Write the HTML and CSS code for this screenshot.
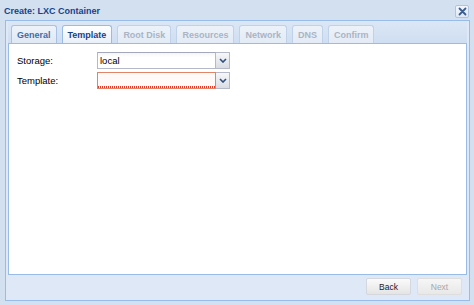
FILE: index.html
```html
<!DOCTYPE html>
<html>
<head>
<meta charset="utf-8">
<link rel="stylesheet" href="styles.css">
</head>
<body>
<div class="window">
  <div class="header">
    <span class="title">Create: LXC Container</span>
    <span class="close"><svg width="9" height="9" viewBox="0 0 9 9"><path d="M1.5 1.5 L7.5 7.5 M7.5 1.5 L1.5 7.5" stroke="#3b5d8f" stroke-width="1.8" stroke-linecap="round"/></svg></span>
  </div>
  <div class="wbody">
    <div class="tabpanel">
      <div class="tabbar">
        <div class="tab">General</div>
        <div class="tab active">Template</div>
        <div class="tab disabled">Root Disk</div>
        <div class="tab disabled">Resources</div>
        <div class="tab disabled">Network</div>
        <div class="tab disabled">DNS</div>
        <div class="tab disabled">Confirm</div>
      </div>
      <div class="tabbody">
        <div class="row">
          <label class="label">Storage:</label>
          <div class="combo">
            <div class="input">local</div>
            <div class="trigger"><svg width="8" height="5" viewBox="0 0 8 5"><path d="M1 1 L4 4 L7 1" fill="none" stroke="#2f4f7f" stroke-width="1.6"/></svg></div>
          </div>
        </div>
        <div class="row">
          <label class="label">Template:</label>
          <div class="combo">
            <div class="input invalid"></div>
            <div class="trigger"><svg width="8" height="5" viewBox="0 0 8 5"><path d="M1 1 L4 4 L7 1" fill="none" stroke="#2f4f7f" stroke-width="1.6"/></svg></div>
          </div>
        </div>
      </div>
    </div>
    <div class="footer">
      <div class="btn">Back</div>
      <div class="btn disabled">Next</div>
    </div>
  </div>
</div>
</body>
</html>
```
FILE: styles.css
```css
html, body {
  margin: 0;
  padding: 0;
}
body {
  font-family: "Liberation Sans", Arial, sans-serif;
  background: #ffffff;
}
.window {
  width: 474px;
  height: 305px;
  box-sizing: border-box;
  background: #d3e0f0;
  padding: 0 4px 4px 5px;
  display: flex;
  flex-direction: column;
}
.header {
  height: 20px;
  display: flex;
  align-items: center;
  justify-content: space-between;
  margin-left: -1px;
}
.title {
  font-size: 9px;
  font-weight: bold;
  color: #15428b;
  padding-top: 1px;
}
.close {
  width: 12px;
  height: 11px;
  border: 1px solid #b0c4de;
  border-radius: 2px;
  background: linear-gradient(#f2f6fb, #dfe8f4);
  display: flex;
  align-items: center;
  justify-content: center;
  margin-right: 1px;
  margin-top: 2px;
}
.wbody {
  flex: 1;
  border: 1px solid #99bbe8;
  background: #dfe8f6;
  display: flex;
  flex-direction: column;
  min-height: 0;
}
.tabpanel {
  flex: 1;
  margin: 0 2px;
  display: flex;
  flex-direction: column;
  min-height: 0;
}
.tabbar {
  height: 22px;
  box-sizing: border-box;
  padding: 4px 3px 0 3px;
  display: flex;
  align-items: flex-end;
  gap: 5px;
  background: linear-gradient(#dce7f5, #cfdef2);
}
.tab {
  height: 18px;
  box-sizing: border-box;
  padding: 0 5px;
  border: 1px solid #a9c1e2;
  border-bottom: none;
  border-radius: 3px 3px 0 0;
  background: linear-gradient(#eef3fa, #dfe8f5);
  font-size: 9px;
  font-weight: bold;
  color: #416da3;
  display: flex;
  align-items: center;
  white-space: nowrap;
}
.tab.active {
  background: linear-gradient(#ffffff, #e9f0fa);
  border-color: #99bbe8;
  color: #15428b;
}
.tab.disabled {
  color: #aab4c4;
  background: linear-gradient(#edf2f9, #e3ebf6);
  border-color: #c0d2ea;
}
.tabbody {
  flex: 1;
  background: #ffffff;
  border: 1px solid #99bbe8;
  padding: 8px 0 0 8px;
  display: flex;
  flex-direction: column;
  gap: 3px;
}
.row {
  display: flex;
  align-items: center;
  height: 17px;
}
.label {
  width: 80px;
  font-size: 9.5px;
  color: #000000;
}
.combo {
  display: flex;
  height: 17px;
}
.input {
  width: 119px;
  height: 17px;
  box-sizing: border-box;
  border: 1px solid #b5b8c8;
  border-top-color: #a5a8b8;
  background: linear-gradient(#f4f4f4, #ffffff 4px);
  font-size: 9.5px;
  padding-left: 2px;
  line-height: 15px;
  color: #000;
}
.input.invalid {
  border-color: #e0856a;
  background-color: #fffaf7;
  background-image: repeating-linear-gradient(90deg, #e23a2a 0 1px, transparent 1px 2px);
  background-size: 100% 2px;
  background-position: 0 100%;
  background-repeat: no-repeat;
}
.trigger {
  width: 14px;
  height: 17px;
  box-sizing: border-box;
  border: 1px solid #b5b8c8;
  border-left: none;
  background: linear-gradient(#f6f7f9, #d9dde3);
  display: flex;
  align-items: center;
  justify-content: center;
}
.footer {
  height: 25px;
  box-sizing: border-box;
  padding: 3px 7px 0 0;
  display: flex;
  justify-content: flex-end;
  align-items: flex-start;
  gap: 6px;
}
.btn {
  width: 45px;
  height: 17px;
  box-sizing: border-box;
  border: 1px solid #d4d8de;
  border-radius: 2px;
  background: linear-gradient(#fbfbfb, #e4e4e4);
  font-size: 8.5px;
  color: #222;
  display: flex;
  align-items: center;
  justify-content: center;
}
.btn.disabled {
  color: #a8a8a8;
  background: linear-gradient(#f6f6f6, #e8e8e8);
  border-color: #dedede;
}
```
